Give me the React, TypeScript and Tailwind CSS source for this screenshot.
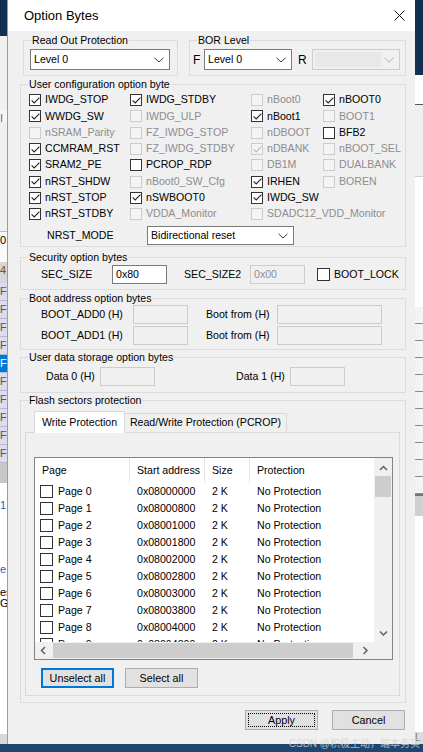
import React from 'react';

type Opt = { label: string; checked?: boolean; disabled?: boolean } | null;

const configRows: Opt[][] = [
  [{ label: 'IWDG_STOP', checked: true }, { label: 'IWDG_STDBY', checked: true }, { label: 'nBoot0', disabled: true }, { label: 'nBOOT0', checked: true }],
  [{ label: 'WWDG_SW', checked: true }, { label: 'IWDG_ULP', disabled: true }, { label: 'nBoot1', checked: true }, { label: 'BOOT1', disabled: true }],
  [{ label: 'nSRAM_Parity', disabled: true }, { label: 'FZ_IWDG_STOP', disabled: true }, { label: 'nDBOOT', disabled: true }, { label: 'BFB2' }],
  [{ label: 'CCMRAM_RST', checked: true }, { label: 'FZ_IWDG_STDBY', disabled: true }, { label: 'nDBANK', checked: true, disabled: true }, { label: 'nBOOT_SEL', disabled: true }],
  [{ label: 'SRAM2_PE', checked: true }, { label: 'PCROP_RDP' }, { label: 'DB1M', disabled: true }, { label: 'DUALBANK', disabled: true }],
  [{ label: 'nRST_SHDW', checked: true }, { label: 'nBoot0_SW_Cfg', disabled: true }, { label: 'IRHEN', checked: true }, { label: 'BOREN', disabled: true }],
  [{ label: 'nRST_STOP', checked: true }, { label: 'nSWBOOT0', checked: true }, { label: 'IWDG_SW', checked: true }, null],
  [{ label: 'nRST_STDBY', checked: true }, { label: 'VDDA_Monitor', disabled: true }, { label: 'SDADC12_VDD_Monitor', disabled: true }, null],
];

const pages = Array.from({ length: 10 }, (_, i) => ({
  name: `Page ${i}`,
  addr: '0x' + (0x08000000 + i * 0x800).toString(16).toUpperCase().padStart(8, '0'),
}));

const CheckBox: React.FC<{ checked?: boolean; disabled?: boolean; big?: boolean }> = ({ checked, disabled, big }) => (
  <span
    className={`flex shrink-0 items-center justify-center border ${big ? 'h-[13px] w-[13px]' : 'h-[12px] w-[12px]'} ${
      disabled ? 'border-[#cccccc] bg-[#f4f4f4]' : 'border-[#333333] bg-white'
    }`}
  >
    {checked && (
      <svg width="9" height="7" viewBox="0 0 9 7">
        <polyline points="0.6,3.4 3.2,6 8.4,0.7" fill="none" stroke={disabled ? '#b8b8b8' : '#222'} strokeWidth="1.1" />
      </svg>
    )}
  </span>
);

const Chevron: React.FC<{ color?: string }> = ({ color = '#3c3c3c' }) => (
  <svg width="10" height="6" viewBox="0 0 10 6">
    <polyline points="0.5,0.8 5,5 9.5,0.8" fill="none" stroke={color} strokeWidth="1" />
  </svg>
);

const ScrollArrow: React.FC<{ dir: 'up' | 'down' | 'left' | 'right' }> = ({ dir }) => {
  const pts = {
    up: '1,5 4.5,1.5 8,5',
    down: '1,1.5 4.5,5 8,1.5',
    left: '5,1 1.5,4.5 5,8',
    right: '1.5,1 5,4.5 1.5,8',
  }[dir];
  const horiz = dir === 'left' || dir === 'right';
  return (
    <svg width={horiz ? 7 : 9} height={horiz ? 9 : 7} viewBox={horiz ? '0 0 7 9' : '0 0 9 7'}>
      <polyline points={pts} fill="none" stroke="#606060" strokeWidth="1.5" />
    </svg>
  );
};

const Legend: React.FC<{ children: React.ReactNode }> = ({ children }) => (
  <legend className="ml-[7px] px-[1px] leading-[13px] text-black">{children}</legend>
);

const TextBox: React.FC<{ value?: string; disabled?: boolean; className: string }> = ({ value, disabled, className }) => (
  <div
    className={`flex h-[19px] items-center border px-[3px] ${className} ${
      disabled ? 'border-[#cccccc] bg-[#f0f0f0] text-[#8d8d8d]' : 'border-[#7a7a7a] bg-white text-black'
    }`}
  >
    {value}
  </div>
);

export default function App() {
  return (
    <div className="relative flex h-[752px] w-[423px] flex-col overflow-hidden bg-[#1d4670] font-['Liberation_Sans',Arial,sans-serif] text-[10.6px] text-black">
      <div className="flex h-[744px]">
        {/* background app, left */}
        <div className="flex w-[8px] flex-col text-[11px] leading-[17px]">
          <div className="h-[36px] bg-[#12304f]" />
          <div className="h-[74px] bg-[#f0f0f0]" />
          <div className="h-[12px] bg-[#f7f7f7] text-[#707070]">I</div>
          <div className="h-[110px] border-b border-[#bdbdbd] bg-[#f0f0f0]" />
          <div className="h-[30px] bg-[#fafafa]">0</div>
          <div className="h-[21px] bg-[#d6d6d6] text-[#8a4b00]">4</div>
          <div className="flex flex-col bg-[#dcdcef] text-[#8a4b00]">
            {[0, 1, 2, 3, 4, 5, 6, 7, 8, 9].map((i) => (
              <div
                key={i}
                className={`h-[18px] border-b border-[#b8b8c8] ${i === 4 ? 'bg-[#0078d7] text-white' : ''}`}
              >
                F
              </div>
            ))}
          </div>
          <div className="h-[20px] bg-[#c8c8c8]" />
          <div className="flex-1 bg-white pt-[14px] text-[#1a5fd0]">
            <div className="h-[64px]">1</div>
            <div className="h-[26px]">e</div>
            <div className="leading-[11px] text-black">es G</div>
          </div>
          <div className="h-[10px] bg-[#d8d8d8]" />
        </div>

        {/* dialog */}
        <div className="flex w-[407px] flex-col bg-[#f0f0f0] shadow-[0_0_0_1px_#9c9c9c]">
          <div className="flex h-[31px] items-center justify-between bg-white pl-[16px] pr-[10px]">
            <span className="text-[13px] text-black">Option Bytes</span>
            <svg width="11" height="11" viewBox="0 0 11 11">
              <path d="M0.5 0.5 L10.5 10.5 M10.5 0.5 L0.5 10.5" stroke="#111" strokeWidth="1" />
            </svg>
          </div>

          <div className="flex flex-col pl-[12px] pr-[9px]">
            {/* Read out / BOR */}
            <div className="mt-[3px] flex">
              <fieldset className="ml-[3px] h-[42px] w-[155px] border border-[#dcdcdc]">
                <Legend>Read Out Protection</Legend>
                <div className="ml-[6px] mt-[2px] flex h-[21px] w-[140px] items-center justify-between border border-[#7a7a7a] bg-white pl-[3px] pr-[5px]">
                  <span>Level 0</span>
                  <Chevron />
                </div>
              </fieldset>
              <fieldset className="ml-[11px] h-[42px] w-[217px] border border-[#dcdcdc]">
                <Legend>BOR Level</Legend>
                <div className="mt-[2px] flex h-[21px] items-center pl-[3px]">
                  <span className="w-[11px] text-[12px]">F</span>
                  <div className="flex h-[21px] w-[88px] items-center justify-between border border-[#7a7a7a] bg-white pl-[3px] pr-[5px]">
                    <span>Level 0</span>
                    <Chevron />
                  </div>
                  <span className="ml-[6px] w-[14px] text-[12px]">R</span>
                  <div className="flex h-[21px] w-[88px] items-center justify-between border border-[#cccccc] bg-[#f0f0f0] p-[2px] pr-[5px]">
                    <div className="h-full w-[66px] bg-[#e8e8e8]" />
                    <Chevron color="#b0b0b0" />
                  </div>
                </div>
              </fieldset>
            </div>

            {/* User configuration */}
            <fieldset className="mt-[2px] h-[169px] border border-[#dcdcdc]">
              <Legend>User configuration option byte</Legend>
              <div className="pl-[8px] pt-[1px]">
                {configRows.map((row, ri) => (
                  <div key={ri} className="grid h-[16.3px] grid-cols-[101px_121px_72px_1fr]">
                    {row.map((o, ci) => (
                      <div key={ci} className="flex items-center gap-[4px] whitespace-nowrap">
                        {o && (
                          <>
                            <CheckBox checked={o.checked} disabled={o.disabled} />
                            <span className={o.disabled ? 'text-[#8d8d8d]' : 'text-black'}>{o.label}</span>
                          </>
                        )}
                      </div>
                    ))}
                  </div>
                ))}
              </div>
              <div className="mt-[4px] flex h-[19px] items-center pl-[26px]">
                <span className="w-[100px]">NRST_MODE</span>
                <div className="flex h-[19px] w-[147px] items-center justify-between border border-[#7a7a7a] bg-white pl-[3px] pr-[5px]">
                  <span>Bidirectional reset</span>
                  <Chevron />
                </div>
              </div>
            </fieldset>

            {/* Security */}
            <fieldset className="mt-[4px] h-[39px] border border-[#dcdcdc]">
              <Legend>Security option bytes</Legend>
              <div className="mt-[1px] flex items-center pl-[20px]">
                <span className="w-[71px]">SEC_SIZE</span>
                <TextBox value="0x80" className="w-[55px]" />
                <span className="ml-[17px] w-[66px]">SEC_SIZE2</span>
                <TextBox value="0x00" disabled className="w-[55px]" />
                <span className="ml-[12px] flex items-center gap-[4px]">
                  <CheckBox big />
                  <span>BOOT_LOCK</span>
                </span>
              </div>
            </fieldset>

            {/* Boot address */}
            <fieldset className="mt-[2px] h-[58px] border border-[#dcdcdc]">
              <Legend>Boot address option bytes</Legend>
              <div className="flex flex-col gap-[2px] pl-[20px]">
                {['BOOT_ADD0 (H)', 'BOOT_ADD1 (H)'].map((l) => (
                  <div key={l} className="flex items-center">
                    <span className="w-[92px]">{l}</span>
                    <TextBox disabled className="w-[55px]" />
                    <span className="ml-[18px] w-[71px]">Boot from (H)</span>
                    <TextBox disabled className="w-[105px]" />
                  </div>
                ))}
              </div>
            </fieldset>

            {/* User data */}
            <fieldset className="mt-[1px] h-[42px] border border-[#dcdcdc]">
              <Legend>User data storage option bytes</Legend>
              <div className="mt-[3px] flex items-center pl-[25px]">
                <span className="w-[54px]">Data 0 (H)</span>
                <TextBox disabled className="w-[55px]" />
                <span className="ml-[81px] w-[54px]">Data 1 (H)</span>
                <TextBox disabled className="w-[55px]" />
              </div>
            </fieldset>

            {/* Flash sectors */}
            <fieldset className="mt-[1px] h-[309px] border border-[#dcdcdc]">
              <Legend>Flash sectors protection</Legend>
              <div className="ml-[4px] w-[375px]">
                <div className="mt-[4px] flex h-[21px] items-end pl-[9px]">
                  <div className="relative z-10 mb-[-1px] flex h-[22px] w-[91px] items-center justify-center border border-b-0 border-[#d9d9d9] bg-white">
                    Write Protection
                  </div>
                  <div className="flex h-[19px] w-[162px] items-center justify-center border border-b-0 border-l-0 border-[#d9d9d9] bg-[#f0f0f0]">
                    Read/Write Protection (PCROP)
                  </div>
                </div>
                <div className="flex h-[264px] flex-col border border-[#dadada] bg-[#f0f0f0]">
                  {/* list */}
                  <div className="ml-[8px] mt-[24px] flex h-[203px] w-[359px] flex-col border border-[#828282] bg-white">
                    <div className="flex h-[184px]">
                      <div className="flex w-[339px] flex-col overflow-hidden">
                        <div className="flex h-[25px] shrink-0 items-center">
                          <div className="flex h-full w-[95px] items-center border-r border-[#e5e5e5] pl-[7px]">Page</div>
                          <div className="flex h-full w-[75px] items-center border-r border-[#e5e5e5] pl-[7px]">Start address</div>
                          <div className="flex h-full w-[45px] items-center border-r border-[#e5e5e5] pl-[7px]">Size</div>
                          <div className="flex h-full items-center pl-[7px]">Protection</div>
                        </div>
                        {pages.map((p) => (
                          <div key={p.name} className="flex h-[17px] shrink-0 items-center whitespace-nowrap">
                            <div className="flex w-[95px] items-center gap-[5px] pl-[5px]">
                              <CheckBox big />
                              <span>{p.name}</span>
                            </div>
                            <div className="w-[75px] pl-[7px]">{p.addr}</div>
                            <div className="w-[45px] pl-[7px]">2 K</div>
                            <div className="pl-[7px]">No Protection</div>
                          </div>
                        ))}
                      </div>
                      <div className="flex w-[18px] flex-col bg-[#f0f0f0]">
                        <div className="flex h-[17px] items-center justify-center pt-[4px]">
                          <ScrollArrow dir="up" />
                        </div>
                        <div className="mx-[1px] mt-[1px] h-[21px] bg-[#cdcdcd]" />
                        <div className="flex-1" />
                        <div className="flex h-[17px] items-center justify-center">
                          <ScrollArrow dir="down" />
                        </div>
                      </div>
                    </div>
                    <div className="flex h-[17px]">
                      <div className="flex w-[339px] items-center bg-[#f0f0f0]">
                        <div className="flex w-[17px] justify-center">
                          <ScrollArrow dir="left" />
                        </div>
                        <div className="ml-[1px] h-[15px] w-[300px] bg-[#cdcdcd]" />
                        <div className="flex-1" />
                        <div className="flex w-[17px] justify-center">
                          <ScrollArrow dir="right" />
                        </div>
                      </div>
                      <div className="w-[18px] bg-[#f0f0f0]" />
                    </div>
                  </div>
                  <div className="mt-[8px] flex">
                    <button className="ml-[15px] flex h-[20px] w-[73px] items-center justify-center border-2 border-[#0078d7] bg-[#e1e1e1] text-[10.8px]">
                      Unselect all
                    </button>
                    <button className="ml-[11px] flex h-[20px] w-[73px] items-center justify-center border border-[#adadad] bg-[#e1e1e1] text-[10.8px]">
                      Select all
                    </button>
                  </div>
                </div>
              </div>
            </fieldset>

            <div className="mt-[7px] flex justify-end gap-[14px] pr-[1px]">
              <button className="flex h-[20px] w-[73px] items-center justify-center border border-[#adadad] bg-[#e1e1e1] p-[2px] text-[10.8px]">
                <span className="flex h-full w-full items-center justify-center border border-dotted border-black">Apply</span>
              </button>
              <button className="flex h-[20px] w-[73px] items-center justify-center border border-[#adadad] bg-[#e1e1e1] text-[10.8px]">
                Cancel
              </button>
            </div>
          </div>
        </div>

        {/* background app, right */}
        <div className="flex w-[8px] flex-col">
          <div className="h-[75px] bg-[#12304f]" />
          <div className="h-[30px] border-b border-[#555] bg-white" />
          <div className="h-[72px] border-b border-[#d0d0d0] bg-[#f0f0f0]" />
          <div className="h-[130px] bg-white" />
          {[0, 1, 2, 3, 4, 5, 6, 7, 8, 9, 10].map((i) => (
            <div key={i} className="h-[17px] border-b border-[#8a8a8a] bg-[#f3f3f3]" />
          ))}
          <div className="h-[22px] border-t-2 border-[#777] bg-[#d0d0d0]" />
          <div className="flex-1 bg-white" />
          <div className="h-[12px] bg-[#dcdcdc] text-[10px] leading-[12px] text-[#777]">L</div>
        </div>
      </div>
      <div className="h-[8px] bg-[#1d4670]" />

      <div className="absolute bottom-[1px] right-[3px] font-['Liberation_Sans','Noto_Sans_CJK_SC',sans-serif] text-[10px] text-[#d4d4d4] opacity-80">
        CSDN @积极主动，端本务实
      </div>
    </div>
  );
}
